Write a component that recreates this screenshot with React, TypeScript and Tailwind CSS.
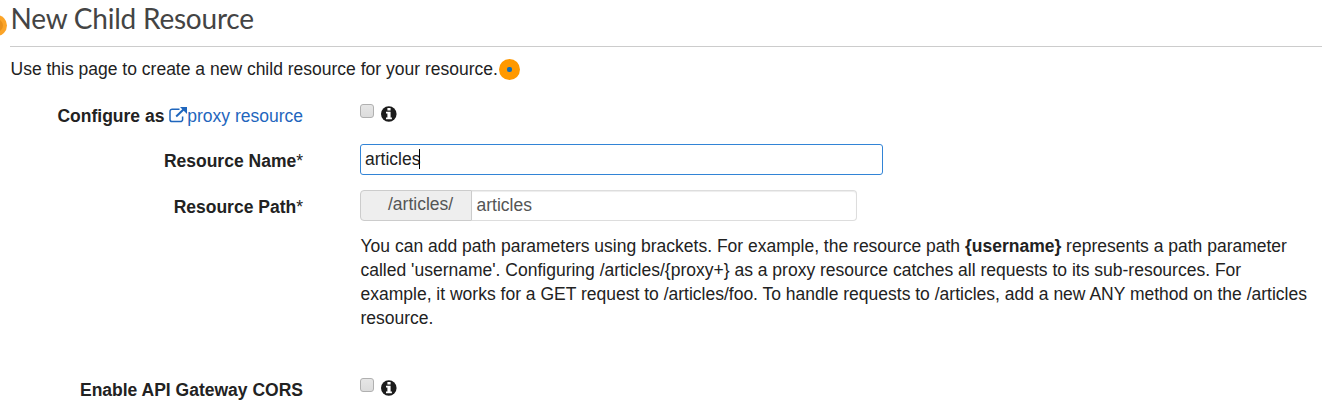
import React from "react";

function Info() {
  return (
    <svg width="16" height="16" viewBox="0 0 16 16" className="block">
      <circle cx="7.8" cy="8" r="7.8" fill="#1b1b1b" />
      <path d="M6.4 2h3.2v2.6H6.4zM5 5.8h4.6v5.6h1.3v1.8H5v-1.8h1.4V7.6H5z" fill="#fff" />
    </svg>
  );
}

function Check() {
  return <span className="block h-[14px] w-[14px] rounded-[3px] border border-[#b0b0b0] bg-gradient-to-b from-[#e6e6e6] to-[#dcdcdc]" />;
}

export default function App() {
  return (
    <div className="relative h-[409px] w-[1322px] overflow-hidden bg-white font-['Liberation_Sans',Arial,sans-serif] text-[17.5px] leading-6 text-[#222]">
      <span className="absolute -left-[14px] top-[15px] flex h-[21px] w-[21px] items-center justify-center rounded-full bg-[#fba428]">
        <span className="h-[13px] w-[13px] rounded-full bg-[#e8901a]" />
      </span>
      <header className="ml-[10px] h-[47px] border-b border-[#cccccc]">
        <h1 className="pl-[0.5px] font-[Lato,sans-serif] text-[28px] leading-9 tracking-[-0.22px] text-[#444]">New Child Resource</h1>
      </header>
      <div className="ml-[10px] flex h-11 items-center">
        <p className="pl-[0.5px]">Use this page to create a new child resource for your resource.</p>
        <span className="ml-px flex h-[21px] w-[21px] items-center justify-center rounded-full bg-[#ff9900]">
          <span className="h-[5px] w-[5px] rounded-[2px] bg-[#146eb4]" />
        </span>
      </div>
      <div className="flex h-[53px]">
        <div className="flex w-[303px] justify-end pt-[13px] font-bold">
          Configure as&nbsp;
          <a className="flex font-normal text-[#1f66bd]">
            <svg width="18" height="16" viewBox="0 0 18 16" className="mt-[3px]" fill="none" stroke="currentColor" strokeWidth="1.5">
              <path d="M10.5 2.2H3.2A2.2 2.2 0 0 0 1 4.4v8a2.2 2.2 0 0 0 2.2 2.2h8.2a2.2 2.2 0 0 0 2.2-2.2V9.5" />
              <path d="M7.2 9.5 15 2" strokeWidth="2" />
              <path d="M11 0h7v7z" fill="currentColor" stroke="none" />
            </svg>
            proxy resource
          </a>
        </div>
        <div className="ml-[57px] flex gap-[7px] pt-[14px]"><div className="-mt-px"><Check /></div><div className="pt-px"><Info /></div></div>
      </div>
      <div className="flex h-[46px]">
        <div className="w-[303px] pt-[5px] text-right font-bold">Resource Name<span className="font-normal">*</span></div>
        <div className="ml-[57px] flex h-[31px] w-[523px] items-center rounded-[3px] border border-[#3284d6] pb-px pl-1">articles<span className="-ml-px h-5 w-px bg-black" /></div>
      </div>
      <div className="flex h-11">
        <div className="w-[303px] pt-[5px] text-right font-bold">Resource Path<span className="font-normal">*</span></div>
        <div className="ml-[57px] flex h-[31px] w-[497px] text-[#555]">
          <div className="w-[112px] rounded-l-[4px] border border-[#ccc] bg-[#eee] pl-[27px] pt-px">/articles/</div>
          <div className="flex-1 rounded-r-[4px] border border-l-0 border-[#ddd] pl-[4.5px] pt-0.5 shadow-[inset_0_1px_1px_rgba(0,0,0,0.075)]">articles</div>
        </div>
      </div>
      <div className="ml-[360px] whitespace-nowrap pl-[0.5px]">
        <p>You can add path parameters using brackets. For example, the resource path <b>{"{username}"}</b> represents a path parameter</p>
        <p>called 'username'. Configuring /articles/{"{proxy+}"} as a proxy resource catches all requests to its sub-resources. For</p>
        <p>example, it works for a GET request to /articles/foo. To handle requests to /articles, add a new ANY method on the /articles</p>
        <p>resource.</p>
      </div>
      <div className="mt-12 flex">
        <div className="w-[303px] text-right font-bold">Enable API Gateway CORS</div>
        <div className="ml-[57px] flex gap-[7px]"><Check /><div className="pt-0.5"><Info /></div></div>
      </div>
    </div>
  );
}
